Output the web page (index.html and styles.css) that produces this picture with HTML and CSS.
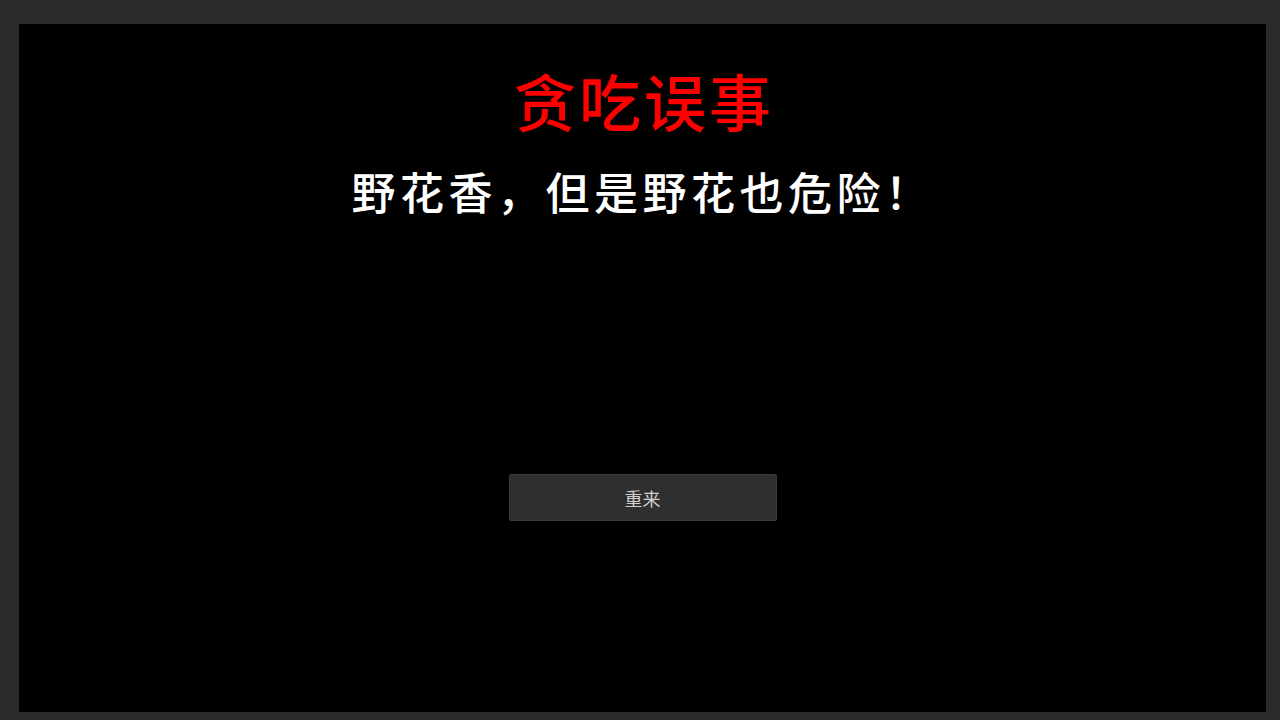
FILE: index.html
```html
<!DOCTYPE html>
<html lang="zh-CN">
<head>
<meta charset="utf-8">
<title>贪吃误事</title>
<link rel="stylesheet" href="styles.css">
</head>
<body>
<main class="panel">
  <h1 class="title">贪吃误事</h1>
  <p class="subtitle">野花香，但是野花也危险！</p>
  <button class="retry" type="button">重来</button>
</main>
</body>
</html>
```

FILE: styles.css
```css
html, body {
  margin: 0;
  padding: 0;
  height: 100%;
}
body {
  background: #2b2b2b;
  padding: 24px 14px 8px 19px;
  box-sizing: border-box;
  font-family: "Noto Sans CJK SC", "Noto Sans", sans-serif;
}
.panel {
  height: 100%;
  background: #000;
  display: flex;
  flex-direction: column;
  align-items: center;
  padding-top: 45px;
  box-sizing: border-box;
}
.title {
  margin: 0;
  font-size: 62px;
  line-height: 1;
  font-weight: 500;
  letter-spacing: 3px;
  text-indent: 3px;
  color: #ff0000;
}
.subtitle {
  margin: 38px 0 0;
  font-size: 44px;
  line-height: 1;
  font-weight: 500;
  letter-spacing: 4.5px;
  color: #ffffff;
}
.retry {
  margin-top: 261px;
  width: 268px;
  height: 47px;
  background: #2f2f2f;
  border: 1px solid #3a3a3a;
  border-radius: 2px;
  color: #cfcfcf;
  font-family: "Noto Sans CJK SC", sans-serif;
  font-size: 18px;
  padding: 0;
}
```
